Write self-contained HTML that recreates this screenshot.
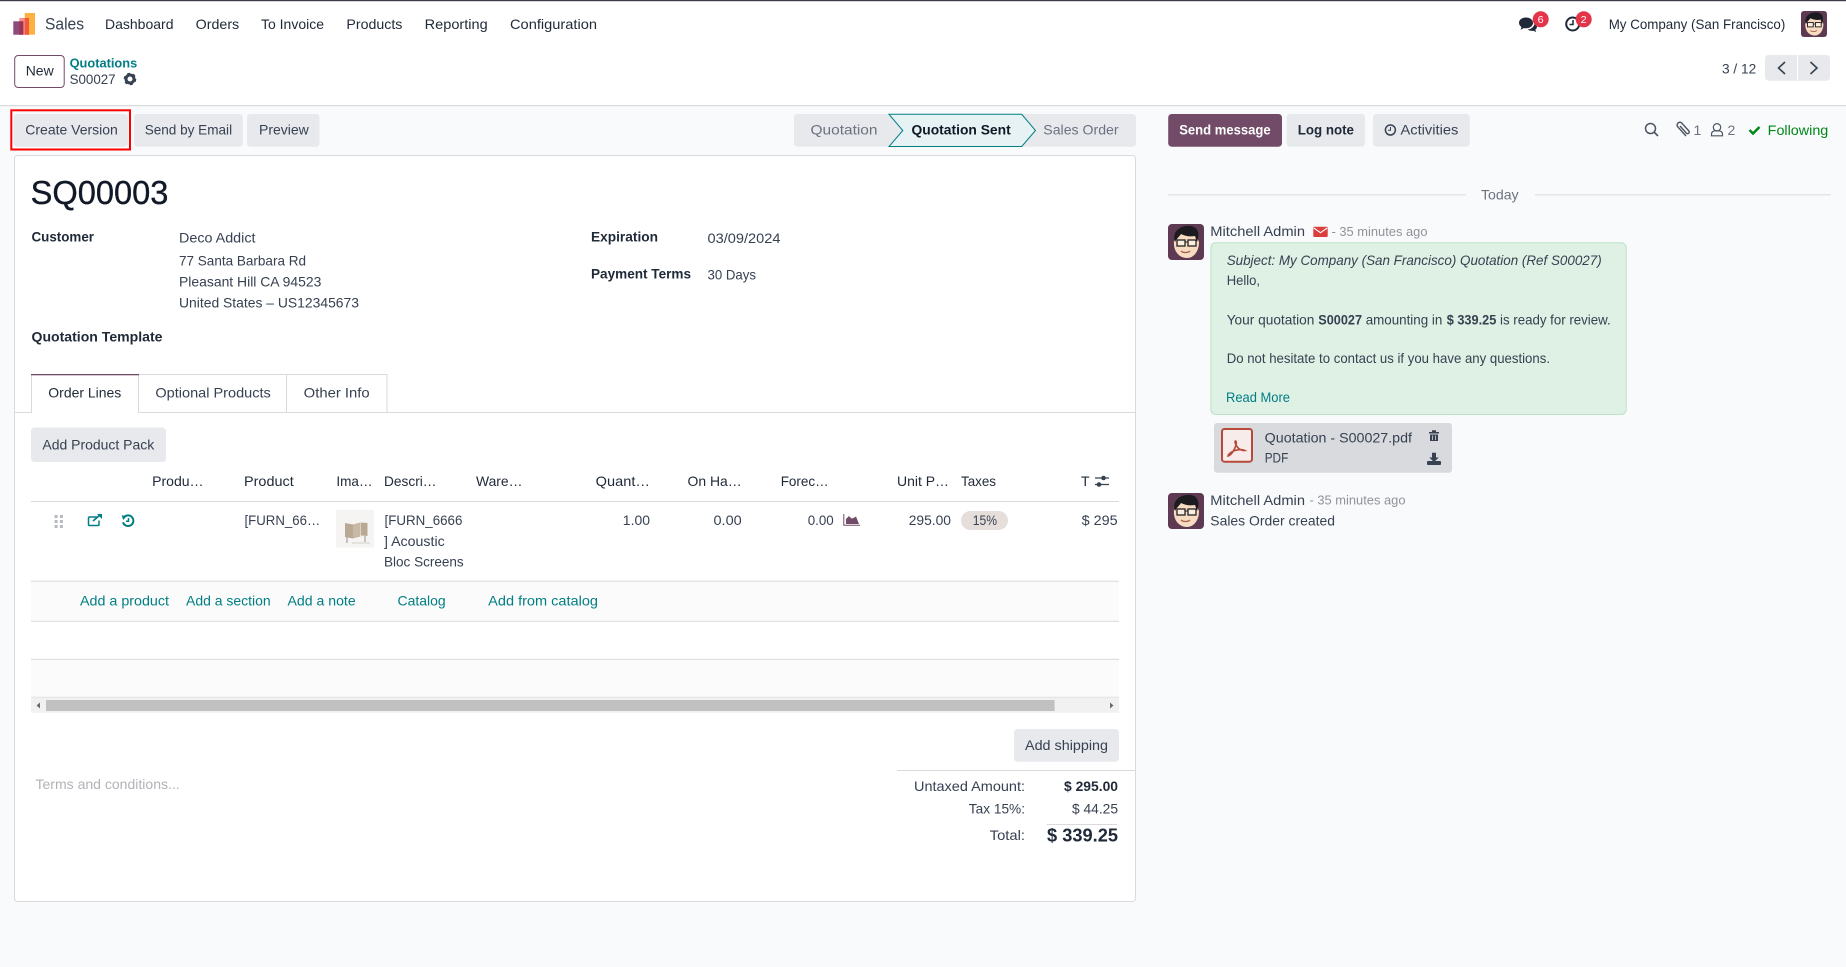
<!DOCTYPE html>
<html lang="en"><head><meta charset="utf-8"><title>S00027 - Sales</title>
<style>
html,body{margin:0;padding:0;background:#f9fafb;width:1846px;height:967px;overflow:hidden}
svg{display:block}
text{font-family:"Liberation Sans",sans-serif;font-size:14px;fill:#374151;white-space:pre}
.b{font-weight:700}.t{fill:#017e84}.d{fill:#1f2937}.g{fill:#6b7280}.m{fill:#8f9399;font-size:13px}
.k{fill:#111827}
</style></head><body>
<svg width="1846" height="967" viewBox="0 0 1846 967" xmlns="http://www.w3.org/2000/svg">
<rect width="1846" height="967" fill="#f9fafb"/>
<!-- header -->
<rect width="1846" height="105" fill="#fff"/>
<rect width="1846" height="1.2" fill="#3b3b46"/>
<rect y="105" width="1846" height="1.2" fill="#d8dadd"/>
<rect x="24.7" y="13" width="10.3" height="21.7" fill="#fdb140"/>
<rect x="19.3" y="18" width="9.7" height="16.7" fill="#f98e8e"/>
<rect x="24.7" y="18" width="4.3" height="16.7" fill="#f05a3c"/>
<rect x="13.3" y="21.3" width="10" height="13.4" fill="#8f4a7d"/>
<rect x="19.3" y="21.3" width="4" height="13.4" fill="#a0344f"/>
<text x="45" y="29.5" style="font-size:17px" textLength="39" lengthAdjust="spacingAndGlyphs">Sales</text>
<text x="105" y="29" class="d" textLength="68.5" lengthAdjust="spacingAndGlyphs">Dashboard</text>
<text x="195.7" y="29" class="d" textLength="43.5" lengthAdjust="spacingAndGlyphs">Orders</text>
<text x="261" y="29" class="d" textLength="63" lengthAdjust="spacingAndGlyphs">To Invoice</text>
<text x="346.4" y="29" class="d" textLength="56" lengthAdjust="spacingAndGlyphs">Products</text>
<text x="424.7" y="29" class="d" textLength="63" lengthAdjust="spacingAndGlyphs">Reporting</text>
<text x="510" y="29" class="d" textLength="87" lengthAdjust="spacingAndGlyphs">Configuration</text>
<!-- systray -->
<path d="M1526 17.5c-4 0-7 2.4-7 5.4 0 1.7 1 3.2 2.5 4.2l-1 2.6 3.4-1.6c.7.2 1.4.2 2.1.2 4 0 7-2.4 7-5.4s-3-5.4-7-5.4z" fill="#1f2937"/>
<path d="M1534.5 22.500c1.500 1 2.500 2.400 2.500 4 0 1.300-.7 2.500-1.700 3.300l.8 2.200-3-1.300c-1.900.4-4-.1-5.300-1.200 3.700-.3 6.900-3.100 6.700-7z" fill="#1f2937"/>
<circle cx="1540.700" cy="19.300" r="8" fill="#e4344a"/><text x="1537.700" y="23" style="font-size:10.500px;fill:#fff" textLength="6" lengthAdjust="spacingAndGlyphs">6</text>
<circle cx="1572.700" cy="24" r="6.500" fill="none" stroke="#1f2937" stroke-width="2"/><path d="M1573 20v4.500h-3.500" fill="none" stroke="#1f2937" stroke-width="1.500"/>
<circle cx="1583.700" cy="19.300" r="8" fill="#e4344a"/><text x="1580.700" y="23" style="font-size:10.500px;fill:#fff" textLength="6" lengthAdjust="spacingAndGlyphs">2</text>
<text x="1608.700" y="29" class="d" textLength="176.600" lengthAdjust="spacingAndGlyphs">My Company (San Francisco)</text>
<g transform="translate(1801 11) scale(.722)"><clipPath id="av1"><rect width="36" height="36" rx="4"/></clipPath><g clip-path="url(#av1)"><rect width="36" height="36" fill="#5d3a52"/><path d="M6 17c-1 10 5 17 13 17 7 0 12-7 12-16L27 9H10z" fill="#f8dcc2"/><path d="M7 18C4 9 10 3 18 2c5-1 11 1 12 6 1 3 0 7-1 10l-2-6c-5 1-10 0-14-2-1 2-4 4-6 8z" fill="#1c1c20"/><rect x="9" y="16" width="8" height="6" fill="#fbeee0" stroke="#222" stroke-width="1.300"/><rect x="20" y="16" width="8" height="6" fill="#fbeee0" stroke="#222" stroke-width="1.300"/><path d="M17 18h3" stroke="#222"/><path d="M13 27c2 2 7 2 9 0" stroke="#a8604c" fill="none" stroke-width="1.300"/></g></g>
<!-- control panel -->
<rect x="14.700" y="55.500" width="49.500" height="32" rx="3.500" fill="#fff" stroke="#714b67"/>
<text x="25.700" y="75.700" class="d" textLength="28" lengthAdjust="spacingAndGlyphs">New</text>
<text x="69.600" y="67.700" class="t b" style="font-size:13px" textLength="67.600" lengthAdjust="spacingAndGlyphs">Quotations</text>
<text x="69.600" y="84" textLength="46" lengthAdjust="spacingAndGlyphs">S00027</text>
<circle cx="130" cy="79" r="4" fill="none" stroke="#374151" stroke-width="3"/><circle cx="130" cy="79" r="5.400" fill="none" stroke="#374151" stroke-width="1.800" stroke-dasharray="2.800 2.850"/>
<text x="1722" y="73.300" textLength="34.300" lengthAdjust="spacingAndGlyphs">3 / 12</text>
<rect x="1765" y="55" width="65" height="25.700" rx="3.500" fill="#e7e9ed"/><rect x="1797" y="55" width="1" height="25.700" fill="#fff"/>
<path d="M1785 62l-6.500 6 6.500 6M1810.500 62l6.500 6-6.500 6" fill="none" stroke="#374151" stroke-width="1.600"/>
<!-- buttons -->
<rect x="13.800" y="114" width="114.200" height="32.700" rx="3.500" fill="#e7e9ed"/>
<rect x="11.300" y="110.300" width="118.700" height="39.200" fill="none" stroke="#f00" stroke-width="2"/>
<text x="25.300" y="134.300" textLength="92.500" lengthAdjust="spacingAndGlyphs">Create Version</text>
<rect x="134" y="114" width="108.800" height="32.700" rx="3.500" fill="#e7e9ed"/>
<text x="144.700" y="134.300" textLength="87.400" lengthAdjust="spacingAndGlyphs">Send by Email</text>
<rect x="247" y="114" width="72.500" height="32.700" rx="3.500" fill="#e7e9ed"/>
<text x="259" y="134.300" textLength="49.800" lengthAdjust="spacingAndGlyphs">Preview</text>
<!-- status bar -->
<rect x="794" y="114" width="342" height="32.700" rx="3.500" fill="#e7e9ed"/>
<text x="810.500" y="134.300" class="g" textLength="67" lengthAdjust="spacingAndGlyphs">Quotation</text>
<path d="M889 114.300h132.700l13.800 16.200-13.800 16H889l13.800-16z" fill="#e6f2f3" stroke="#017e84"/>
<text x="911.500" y="134.300" class="k b" textLength="99.200" lengthAdjust="spacingAndGlyphs">Quotation Sent</text>
<text x="1043.300" y="134.300" class="g" textLength="75.300" lengthAdjust="spacingAndGlyphs">Sales Order</text>
<!-- chatter buttons -->
<rect x="1168.200" y="114" width="113.800" height="32.700" rx="3.500" fill="#714b67"/>
<text x="1179.200" y="134.300" class="b" style="fill:#fff" textLength="91.400" lengthAdjust="spacingAndGlyphs">Send message</text>
<rect x="1286.600" y="114" width="78.400" height="32.700" rx="3.500" fill="#e7e9ed"/>
<text x="1297.700" y="134.300" class="d b" textLength="56.300" lengthAdjust="spacingAndGlyphs">Log note</text>
<rect x="1373" y="114" width="96.800" height="32.700" rx="3.500" fill="#e7e9ed"/>
<circle cx="1390.400" cy="130" r="5" fill="none" stroke="#374151" stroke-width="1.500"/><path d="M1390.500 127v3.300h-2.500" fill="none" stroke="#374151"/>
<text x="1400.500" y="134.300" textLength="57.800" lengthAdjust="spacingAndGlyphs">Activities</text>
<circle cx="1650.500" cy="128.500" r="5" fill="none" stroke="#4b5563" stroke-width="1.500"/><path d="M1654 132l4 4" stroke="#4b5563" stroke-width="1.600"/>
<path d="M1686 135.500l-8.500-9.500a2.800 2.800 0 0 1 4-3.700l7.500 8.300a1.700 1.700 0 0 1-2.500 2.200l-6.500-7.300" fill="none" stroke="#4b5563" stroke-width="1.400" transform="translate(0 .5)"/>
<text x="1693.500" y="135" class="g">1</text>
<circle cx="1717" cy="127.300" r="3.700" fill="none" stroke="#4b5563" stroke-width="1.200"/><path d="M1711.500 135.800v-1.800c0-2 2-3.200 3.500-3.200h4c1.500 0 3.500 1.200 3.500 3.200v1.800z" fill="none" stroke="#4b5563" stroke-width="1.200"/>
<text x="1727.500" y="135" class="g">2</text>
<path d="M1749.500 130l3.500 3.500 6.500-6.500" fill="none" stroke="#008818" stroke-width="2.500"/>
<text x="1767.700" y="135" style="fill:#008818" textLength="60.600" lengthAdjust="spacingAndGlyphs">Following</text>
<!-- form sheet -->
<rect x="14.500" y="155.500" width="1121" height="746" rx="3" fill="#fff" stroke="#d8dadd"/>
<text x="30.600" y="204" class="k" style="font-size:33px;stroke:#111827;stroke-width:.35" textLength="137.800" lengthAdjust="spacingAndGlyphs">SQ00003</text>
<text x="31.500" y="241.500" class="d b" textLength="62.500" lengthAdjust="spacingAndGlyphs">Customer</text>
<text x="179" y="242.500" textLength="76.500" lengthAdjust="spacingAndGlyphs">Deco Addict</text>
<text x="179" y="265.500" textLength="127" lengthAdjust="spacingAndGlyphs">77 Santa Barbara Rd</text>
<text x="179" y="286.500" textLength="142.400" lengthAdjust="spacingAndGlyphs">Pleasant Hill CA 94523</text>
<text x="179" y="307.500" textLength="180" lengthAdjust="spacingAndGlyphs">United States – US12345673</text>
<text x="591" y="241.500" class="d b" textLength="67" lengthAdjust="spacingAndGlyphs">Expiration</text>
<text x="707.500" y="243" textLength="73" lengthAdjust="spacingAndGlyphs">03/09/2024</text>
<text x="591" y="278.500" class="d b" textLength="100" lengthAdjust="spacingAndGlyphs">Payment Terms</text>
<text x="707.500" y="279.500" textLength="48.500" lengthAdjust="spacingAndGlyphs">30 Days</text>
<text x="31.500" y="341.700" class="d b" textLength="131" lengthAdjust="spacingAndGlyphs">Quotation Template</text>
<!-- tabs -->
<rect x="14.500" y="412" width="1121" height="1" fill="#d8dadd"/>
<path d="M139 374.500h147.500v37.500M286.500 374.500h100.500v37.500M138.500 374.500v38M31.500 374.500v38" fill="none" stroke="#d8dadd"/>
<rect x="32" y="375" width="106" height="38" fill="#fff"/>
<rect x="31" y="374" width="108" height="1.300" fill="#714b67"/>
<text x="48.300" y="397.500" class="d" textLength="73" lengthAdjust="spacingAndGlyphs">Order Lines</text>
<text x="155.400" y="397.500" textLength="115.400" lengthAdjust="spacingAndGlyphs">Optional Products</text>
<text x="303.700" y="397.500" textLength="66" lengthAdjust="spacingAndGlyphs">Other Info</text>
<rect x="31" y="427.500" width="135" height="34.500" rx="3.500" fill="#e7e9ed"/>
<text x="42.400" y="449.500" textLength="111.800" lengthAdjust="spacingAndGlyphs">Add Product Pack</text>
<!-- table header -->
<text x="152.100" y="486" class="d" textLength="51.500" lengthAdjust="spacingAndGlyphs">Produ…</text>
<text x="244" y="486" class="d" textLength="49.700" lengthAdjust="spacingAndGlyphs">Product</text>
<text x="336.400" y="486" class="d" textLength="36.100" lengthAdjust="spacingAndGlyphs">Ima…</text>
<text x="384" y="486" class="d" textLength="52.500" lengthAdjust="spacingAndGlyphs">Descri…</text>
<text x="476" y="486" class="d" textLength="46.500" lengthAdjust="spacingAndGlyphs">Ware…</text>
<text x="595.700" y="486" class="d" textLength="54.300" lengthAdjust="spacingAndGlyphs">Quant…</text>
<text x="687.500" y="486" class="d" textLength="54.200" lengthAdjust="spacingAndGlyphs">On Ha…</text>
<text x="780.700" y="486" class="d" textLength="48" lengthAdjust="spacingAndGlyphs">Forec…</text>
<text x="897" y="486" class="d" textLength="52" lengthAdjust="spacingAndGlyphs">Unit P…</text>
<text x="961" y="486" class="d" textLength="35" lengthAdjust="spacingAndGlyphs">Taxes</text>
<text x="1081" y="486" class="d">T</text>
<path d="M1095 478h14M1095 484.500h14" stroke="#374151" stroke-width="1.200"/><circle cx="1103.500" cy="478" r="2.300" fill="#374151"/><circle cx="1099" cy="484.500" r="2.300" fill="#374151"/>
<rect x="31" y="501" width="1088" height="1" fill="#d8dadd"/>
<!-- row -->
<g fill="#b6bac0"><rect x="54.600" y="515" width="3" height="3"/><rect x="59.900" y="515" width="3" height="3"/><rect x="54.600" y="520" width="3" height="3"/><rect x="59.900" y="520" width="3" height="3"/><rect x="54.600" y="525" width="3" height="3"/><rect x="59.900" y="525" width="3" height="3"/></g>
<path d="M97 517h-7.500a1 1 0 0 0-1 1v6.500a1 1 0 0 0 1 1h8.500a1 1 0 0 0 1-1v-4" fill="none" stroke="#017e84" stroke-width="1.500"/><path d="M93 521l7-6" stroke="#017e84" stroke-width="1.700"/><path d="M97 514h5v5z" fill="#017e84"/>
<path d="M124 517.300a5.300 5.300 0 1 1-1 5" fill="none" stroke="#017e84" stroke-width="2"/><path d="M121.800 515.300l5 1-3.700 3.700z" fill="#017e84"/><path d="M128.500 518v3.300h-2.500" fill="none" stroke="#017e84" stroke-width="1.500"/>
<text x="244.500" y="525" textLength="75.700" lengthAdjust="spacingAndGlyphs">[FURN_66…</text>
<rect x="336" y="510" width="38" height="37.700" fill="#f5f4f3"/>
<path d="M345 523l8 1.500v14l-8-1.500z" fill="#b9a994"/><path d="M353 524.500l7-2 .5 14-7.500 2z" fill="#c8b9a6"/><path d="M360.500 522.500l7 .5v13l-6.500-.5z" fill="#b9a994"/>
<path d="M347 537v6M365 536v6" stroke="#a9a498" stroke-width="1.200"/><path d="M352 543h18" stroke="#e4e2de" stroke-width="2"/>
<text x="384.500" y="525" textLength="77.900" lengthAdjust="spacingAndGlyphs">[FURN_6666</text>
<text x="384" y="546" textLength="60.700" lengthAdjust="spacingAndGlyphs">] Acoustic</text>
<text x="384" y="566.700" textLength="79.700" lengthAdjust="spacingAndGlyphs">Bloc Screens</text>
<text x="622.800" y="525" textLength="27.200" lengthAdjust="spacingAndGlyphs">1.00</text>
<text x="713.500" y="525" textLength="28.200" lengthAdjust="spacingAndGlyphs">0.00</text>
<text x="807.700" y="525" textLength="26" lengthAdjust="spacingAndGlyphs">0.00</text>
<path d="M843.800 514v11.300h16.200" fill="none" stroke="#714b67" stroke-width="1"/><path d="M846 524v-5l3-3 2.500 2.500 2-.5 2.500-1.500 3 7.500z" fill="#714b67"/>
<text x="908.700" y="525" textLength="42.300" lengthAdjust="spacingAndGlyphs">295.00</text>
<rect x="961" y="511" width="47" height="19" rx="9.500" fill="#e5dedb"/>
<text x="972.700" y="525" textLength="24.300" lengthAdjust="spacingAndGlyphs">15%</text>
<svg x="1075" y="505" width="44" height="30"><text x="6.700" y="20" textLength="56" lengthAdjust="spacingAndGlyphs">$ 295.00</text></svg>
<!-- add row & empties -->
<rect x="31" y="581" width="1088" height="40" fill="#fbfbfb"/>
<rect x="31" y="659" width="1088" height="38" fill="#fbfbfb"/>
<rect x="31" y="580.700" width="1088" height="1" fill="#d8dadd"/>
<rect x="31" y="620.800" width="1088" height="1" fill="#d8dadd"/>
<rect x="31" y="658.800" width="1088" height="1" fill="#d8dadd"/>
<rect x="31" y="696.800" width="1088" height="1" fill="#d8dadd"/>
<text x="80" y="605.700" class="t" textLength="89" lengthAdjust="spacingAndGlyphs">Add a product</text>
<text x="186" y="605.700" class="t" textLength="84.700" lengthAdjust="spacingAndGlyphs">Add a section</text>
<text x="287.500" y="605.700" class="t" textLength="68.200" lengthAdjust="spacingAndGlyphs">Add a note</text>
<text x="397.500" y="605.700" class="t" textLength="48.200" lengthAdjust="spacingAndGlyphs">Catalog</text>
<text x="488.200" y="605.700" class="t" textLength="109.800" lengthAdjust="spacingAndGlyphs">Add from catalog</text>
<!-- scrollbar -->
<rect x="31" y="697.500" width="1088" height="15.300" fill="#f1f1f1"/>
<rect x="46" y="700" width="1008.600" height="11" fill="#c1c1c1"/>
<path d="M40 702.500v6l-3.500-3zM1110 702.500v6l3.500-3z" fill="#6a6a6a"/>
<rect x="1014" y="729" width="105" height="32.700" rx="3.500" fill="#e7e9ed"/>
<text x="1025" y="750" textLength="83" lengthAdjust="spacingAndGlyphs">Add shipping</text>
<rect x="897" y="770" width="239" height="1" fill="#d8dadd"/>
<text x="35.500" y="789" style="fill:#b0b3b8" textLength="144.200" lengthAdjust="spacingAndGlyphs">Terms and conditions...</text>
<text x="914" y="791" textLength="111" lengthAdjust="spacingAndGlyphs">Untaxed Amount:</text>
<text x="1064" y="791" class="d b" textLength="54" lengthAdjust="spacingAndGlyphs">$ 295.00</text>
<text x="968.800" y="813.700" textLength="56.200" lengthAdjust="spacingAndGlyphs">Tax 15%:</text>
<text x="1072" y="813.700" textLength="46" lengthAdjust="spacingAndGlyphs">$ 44.25</text>
<rect x="1046.700" y="824" width="70.300" height="1" fill="#d8dadd"/>
<text x="989.700" y="840" textLength="35.300" lengthAdjust="spacingAndGlyphs">Total:</text>
<text x="1047" y="841.700" class="d b" style="font-size:18px" textLength="71" lengthAdjust="spacingAndGlyphs">$ 339.25</text>
<!-- chatter -->
<rect x="1168" y="194.300" width="298" height="1" fill="#d8dadd"/><rect x="1535" y="194.300" width="296" height="1" fill="#d8dadd"/>
<text x="1481" y="199.500" class="g" textLength="37.600" lengthAdjust="spacingAndGlyphs">Today</text>
<g transform="translate(1168 224)"><clipPath id="av2"><rect width="36" height="36" rx="4"/></clipPath><g clip-path="url(#av2)"><rect width="36" height="36" fill="#5d3a52"/><path d="M6 17c-1 10 5 17 13 17 7 0 12-7 12-16L27 9H10z" fill="#f8dcc2"/><path d="M7 18C4 9 10 3 18 2c5-1 11 1 12 6 1 3 0 7-1 10l-2-6c-5 1-10 0-14-2-1 2-4 4-6 8z" fill="#1c1c20"/><rect x="9" y="16" width="8" height="6" fill="#fbeee0" stroke="#222" stroke-width="1.300"/><rect x="20" y="16" width="8" height="6" fill="#fbeee0" stroke="#222" stroke-width="1.300"/><path d="M17 18h3" stroke="#222"/><path d="M13 27c2 2 7 2 9 0" stroke="#a8604c" fill="none" stroke-width="1.300"/></g></g>
<text x="1210.300" y="236" textLength="94.700" lengthAdjust="spacingAndGlyphs">Mitchell Admin</text>
<rect x="1313.300" y="226.700" width="14.400" height="10.300" rx="1" fill="#dc3d3d"/><path d="M1313.800 228l6.700 4.700 6.700-4.700" fill="none" stroke="#fff" stroke-width="1.100"/>
<text x="1331.500" y="235.800" class="m" textLength="96" lengthAdjust="spacingAndGlyphs">- 35 minutes ago</text>
<rect x="1210.800" y="242.800" width="415.400" height="171.700" rx="5" fill="#dff0e4" stroke="#bde3c7"/>
<text x="1226.700" y="265" style="font-style:italic" textLength="375" lengthAdjust="spacingAndGlyphs">Subject: My Company (San Francisco) Quotation (Ref S00027)</text>
<text x="1226.700" y="285" textLength="33.300" lengthAdjust="spacingAndGlyphs">Hello,</text>
<text x="1226.700" y="324.300" textLength="87.700" lengthAdjust="spacingAndGlyphs">Your quotation</text>
<text x="1318.300" y="324.300" class="b" textLength="43.700" lengthAdjust="spacingAndGlyphs">S00027</text>
<text x="1365.700" y="324.300" textLength="76.600" lengthAdjust="spacingAndGlyphs">amounting in</text>
<text x="1446.700" y="324.300" class="b" textLength="49.600" lengthAdjust="spacingAndGlyphs">$ 339.25</text>
<text x="1500" y="324.300" textLength="110.700" lengthAdjust="spacingAndGlyphs">is ready for review.</text>
<text x="1226.700" y="363" textLength="323.300" lengthAdjust="spacingAndGlyphs">Do not hesitate to contact us if you have any questions.</text>
<text x="1226" y="402" class="t" textLength="64" lengthAdjust="spacingAndGlyphs">Read More</text>
<!-- attachment -->
<rect x="1214" y="423" width="238" height="49.700" rx="3" fill="#d8dade"/>
<rect x="1222" y="429" width="30" height="32.700" rx="2.500" fill="#f7ece9" stroke="#b84a3b" stroke-width="2"/>
<path d="M1228 456c3-1 6-5 8-11 .7-2.500 0-4.500-.7-4-.8.700 0 3 2 6 1.500 2.200 5 3.800 7.500 3.500-3-1.500-8-1-12 .8-2.500 1.200-4.800 3.300-4.800 4.700z" fill="none" stroke="#b84a3b" stroke-width="1.600"/>
<text x="1264.700" y="442.700" textLength="147.300" lengthAdjust="spacingAndGlyphs">Quotation - S00027.pdf</text>
<text x="1264.700" y="462.700" textLength="23.600" lengthAdjust="spacingAndGlyphs">PDF</text>
<path d="M1429 432h10v1.500h-10zM1432 430.200h4v1.800h-4zM1430 434.500h8v6.500h-8z" fill="#374151"/><path d="M1432.500 435.500v4.500M1435.500 435.500v4.500" stroke="#d8dade" stroke-width=".8"/>
<path d="M1432 452.700h4v4.800h2.800l-4.800 4.500-4.800-4.500h2.800z" fill="#374151"/><rect x="1427" y="461" width="14" height="4" rx="1" fill="#374151"/>
<!-- message 2 -->
<g transform="translate(1168 493)"><clipPath id="av3"><rect width="36" height="36" rx="4"/></clipPath><g clip-path="url(#av3)"><rect width="36" height="36" fill="#5d3a52"/><path d="M6 17c-1 10 5 17 13 17 7 0 12-7 12-16L27 9H10z" fill="#f8dcc2"/><path d="M7 18C4 9 10 3 18 2c5-1 11 1 12 6 1 3 0 7-1 10l-2-6c-5 1-10 0-14-2-1 2-4 4-6 8z" fill="#1c1c20"/><rect x="9" y="16" width="8" height="6" fill="#fbeee0" stroke="#222" stroke-width="1.300"/><rect x="20" y="16" width="8" height="6" fill="#fbeee0" stroke="#222" stroke-width="1.300"/><path d="M17 18h3" stroke="#222"/><path d="M13 27c2 2 7 2 9 0" stroke="#a8604c" fill="none" stroke-width="1.300"/></g></g>
<text x="1210.300" y="505" textLength="94.700" lengthAdjust="spacingAndGlyphs">Mitchell Admin</text>
<text x="1309.500" y="504.500" class="m" textLength="96" lengthAdjust="spacingAndGlyphs">- 35 minutes ago</text>
<text x="1210.300" y="525.300" textLength="124.700" lengthAdjust="spacingAndGlyphs">Sales Order created</text>
</svg>
</body></html>
